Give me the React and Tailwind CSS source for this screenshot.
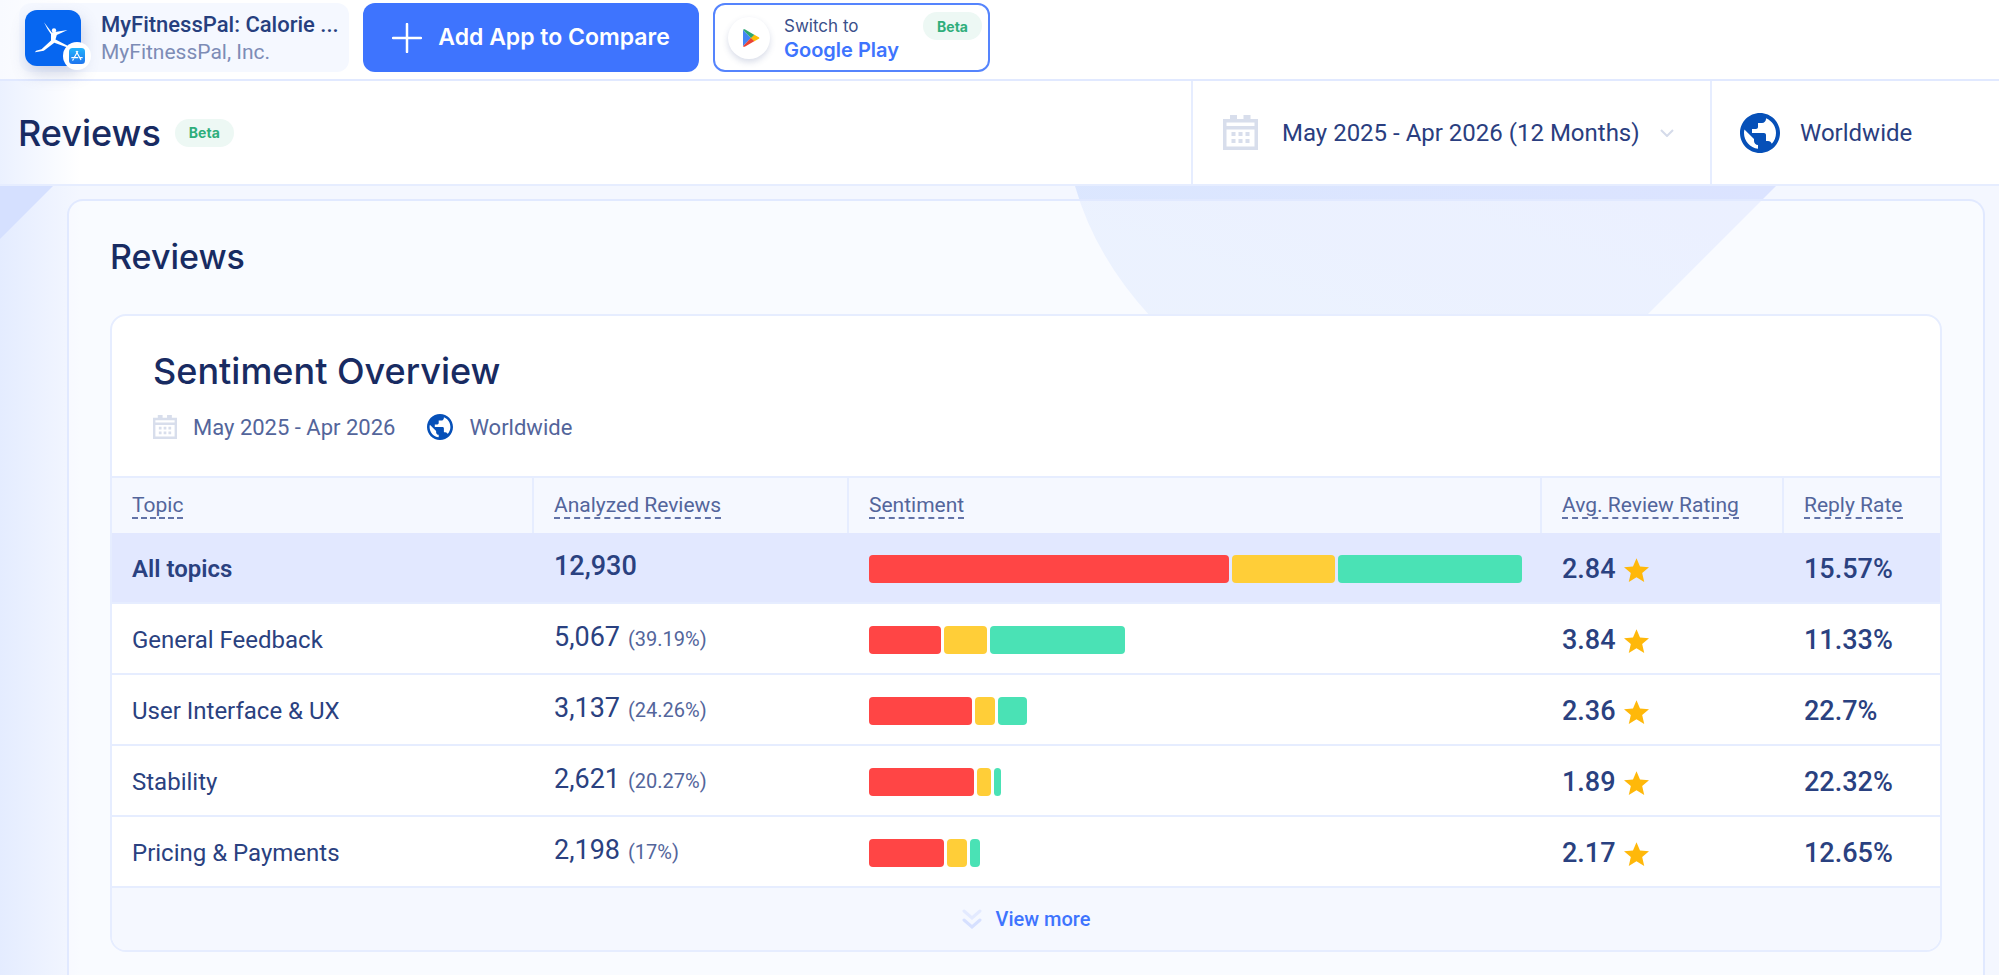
import React from 'react';

const topics = [
  {
    name: 'All topics',
    reviews: '12,930',
    share: 100,
    sentiment: [360, 103, 184],
    rating: '2.84',
    reply: '15.57%',
  },
  {
    name: 'General Feedback',
    reviews: '5,067',
    percent: '(39.19%)',
    share: 39.19,
    sentiment: [71, 43, 134],
    rating: '3.84',
    reply: '11.33%',
  },
  {
    name: 'User Interface & UX',
    reviews: '3,137',
    percent: '(24.26%)',
    share: 24.26,
    sentiment: [102, 20, 29],
    rating: '2.36',
    reply: '22.7%',
  },
  {
    name: 'Stability',
    reviews: '2,621',
    percent: '(20.27%)',
    share: 20.27,
    sentiment: [105, 14, 7],
    rating: '1.89',
    reply: '22.32%',
  },
  {
    name: 'Pricing & Payments',
    reviews: '2,198',
    percent: '(17%)',
    share: 17,
    sentiment: [75, 20, 10],
    rating: '2.17',
    reply: '12.65%',
  },
];

const columns = [
  { title: 'Topic', width: 'w-[422px]' },
  { title: 'Analyzed Reviews', width: 'w-[315px]' },
  { title: 'Sentiment', width: '' },
  { title: 'Avg. Review Rating', width: 'w-[242px]' },
  { title: 'Reply Rate', width: 'w-[156px]' },
];

const sentimentColors = ['bg-[#ff4545]', 'bg-[#ffce38]', 'bg-[#4ae2b5]'];

const CalendarIcon = ({ className }) => (
  <svg viewBox="0 0 35 35" className={className} fill="#d8deec" aria-hidden="true">
    <path
      fillRule="evenodd"
      d="M0 4h7V0h7v4h6.500V0h7v4H35v31H0zM3.500 7.500v3.500h28V7.500zM3.500 14.500v17h28v-17z"
    />
    <path d="M8.500 17h4v4h-4zM15.500 17h4v4h-4zM22.500 17h4v4h-4zM8.500 24h4v4h-4zM15.500 24h4v4h-4zM22.500 24h4v4h-4z" />
  </svg>
);

const GlobeIcon = ({ className }) => (
  <svg viewBox="2 2 20 20" className={className} fill="#0650b8" aria-hidden="true">
    <path d="M12 2C6.480 2 2 6.480 2 12s4.480 10 10 10 10-4.480 10-10S17.520 2 12 2zm-1 17.930c-3.950-.49-7-3.850-7-7.930 0-.62.08-1.210.21-1.790L9 15v1c0 1.100.9 2 2 2v1.930zm6.900-2.540c-.26-.81-1-1.390-1.900-1.390h-1v-3c0-.55-.45-1-1-1H8v-2h2c.55 0 1-.45 1-1V7h2c1.100 0 2-.9 2-2v-.41c2.930 1.190 5 4.060 5 7.410 0 2.080-.8 3.970-2.100 5.390z" />
  </svg>
);

const StarIcon = () => (
  <svg viewBox="2 2 20 19" className="h-6 w-[25px]" fill="#ffb80a" aria-hidden="true">
    <path d="M12 17.270 18.180 21l-1.640-7.030L22 9.240l-7.190-.61L12 2 9.190 8.630 2 9.240l5.460 4.730L5.820 21z" />
  </svg>
);

const BetaBadge = () => (
  <span className="flex h-7 items-center rounded-full bg-[#edf8f4] px-3.5 font-[Inter,sans-serif] text-[14px] font-bold text-[#2fae7b]">
    Beta
  </span>
);

const AppLogo = () => (
  <div className="relative size-14 shrink-0 rounded-xl bg-[#0666f0] shadow-[2px_8px_16px_rgba(80,100,160,0.25)]">
    <svg viewBox="0 0 56 56" className="size-14" aria-hidden="true">
      <circle cx="29" cy="20.500" r="2.200" fill="#fff" />
      <path
        d="M19 12.300 26.800 22.500 42.500 20l-10.700 5-1.300 4.500L48 38.500l-3.500-.2-15.200-5.600-10.500 8-8.800 1.600 1-1.600 5.500-1.500L26 30.500v-6.200L22.500 19z"
        fill="#fff"
      />
    </svg>
    {/* App Store marker */}
    <span className="absolute -right-2.5 -bottom-1 flex size-7 items-center justify-center rounded-full bg-white">
      <svg viewBox="0 0 16 16" className="size-4" aria-hidden="true">
        <defs>
          <linearGradient id="store" x1="0" y1="0" x2="0" y2="1">
            <stop offset="0" stopColor="#22b4fb" />
            <stop offset="1" stopColor="#1f74ee" />
          </linearGradient>
        </defs>
        <rect width="16" height="16" rx="3.500" fill="url(#store)" />
        <path
          d="M8.700 3.500 5 10M7.300 3.500 11.800 11.500M2.800 9.700h6M11 9.700h2.200M4.300 11.300l-.5.900"
          stroke="#fff"
          strokeWidth="1.200"
          strokeLinecap="round"
          fill="none"
        />
      </svg>
    </span>
  </div>
);

const PlayLogo = () => (
  <span className="flex size-[42px] shrink-0 items-center justify-center rounded-full bg-white shadow-[0_3px_6px_rgba(60,80,140,0.2)]">
    <svg viewBox="0 0 18 18" className="ml-1 size-[18px]" aria-hidden="true">
      <path d="M1 .8v16.400L9 9z" fill="#4285f4" />
      <path d="M1 .8C1.600 0 2.400 0 3.200.5L12.600 5.900 9.200 9.300z" fill="#2da771" />
      <path d="M1 17.200c.6.800 1.400.8 2.200.3l9.400-5.400L9 8.700z" fill="#ea4335" />
      <path d="M12.400 5.800 16.800 8.200c.8.500.8 1.100 0 1.600l-4.400 2.400L9 9z" fill="#fbbc04" />
    </svg>
  </span>
);

const TopBar = () => (
  <header className="flex h-[81px] items-start gap-3.5 border-b-2 border-[#e1e9ff] bg-[linear-gradient(to_right,#f8faff,#ffffff_80px)] pt-[3px] pl-[19px]">
    <div className="flex h-[69px] w-[330px] items-center gap-5 rounded-xl bg-[#f5f8ff] pl-1.5">
      <AppLogo />
      <div className="whitespace-nowrap">
        <p className="text-[22px] leading-7 font-medium text-[#263f7e]">MyFitnessPal: Calorie ...</p>
        <p className="text-[21px] leading-[26px] text-[#7d8cb6]">MyFitnessPal, Inc.</p>
      </div>
    </div>

    <button
      type="button"
      className="flex h-[69px] w-[336px] items-center justify-center gap-4 rounded-xl bg-[#3e74fe] font-[Inter,sans-serif] text-[23px] font-semibold text-white"
    >
      <svg viewBox="0 0 30 30" className="size-[30px]" aria-hidden="true">
        <path d="M15 1v28M1 15h28" stroke="#fff" strokeWidth="2.500" strokeLinecap="round" />
      </svg>
      Add App to Compare
    </button>

    <button
      type="button"
      className="flex h-[69px] w-[277px] items-center gap-3.5 rounded-xl border-2 border-[#5584fd] bg-white pl-[13px] text-left font-[Inter,sans-serif]"
    >
      <PlayLogo />
      <span className="flex flex-1 flex-col">
        <span className="text-[17px] leading-6 text-[#3a4f8a]">Switch to</span>
        <span className="text-[20px] leading-6 font-semibold whitespace-nowrap text-[#3e74fe]">
          Google Play
        </span>
      </span>
      <span className="-ml-20 self-start pt-[7px] pr-1.5">
        <BetaBadge />
      </span>
    </button>
  </header>
);

const PageBar = () => (
  <div className="flex h-[105px] items-stretch border-b-2 border-[#e6edff] bg-[linear-gradient(to_right,#ebf1ff,#ffffff_80px)]">
    <div className="flex flex-1 items-center gap-3.5 pl-[18px]">
      <h1 className="font-[Inter,sans-serif] text-[36px] font-medium text-[#182b62]">Reviews</h1>
      <BetaBadge />
    </div>
    <button
      type="button"
      className="flex w-[519px] items-center border-l-2 border-[#e6edff] pl-[30px] text-[24px] text-[#2a3e80]"
    >
      <CalendarIcon className="mr-6 size-[35px]" />
      May 2025 - Apr 2026 (12 Months)
      <svg viewBox="0 0 14 8" className="ml-5 h-2 w-3.5" aria-hidden="true">
        <path d="M1 1l6 6 6-6" stroke="#d5dbea" strokeWidth="2" fill="none" />
      </svg>
    </button>
    <button
      type="button"
      className="flex w-[289px] items-center gap-5 border-l-2 border-[#e6edff] pl-7 text-[24px] text-[#2a3e80]"
    >
      <GlobeIcon className="size-10" />
      Worldwide
    </button>
  </div>
);

const SentimentBar = ({ share, values }) => (
  <div className="flex h-7 gap-[3px]" style={{ width: `${share}%` }}>
    {values.map((value, i) => (
      <div key={i} className={`${sentimentColors[i]} basis-0 rounded`} style={{ flexGrow: value }} />
    ))}
  </div>
);

const SentimentTable = () => (
  <table className="w-full table-fixed border-separate border-spacing-0 text-left">
    <thead>
      <tr className="h-[57px] bg-[#f5f8ff]">
        {columns.map((col, i) => (
          <th
            key={col.title}
            className={`${col.width} border-t-2 border-[#e6edff] px-5 text-[21px] font-normal whitespace-nowrap text-[#53659b] ${
              i < columns.length - 1 ? 'border-r-2' : ''
            }`}
          >
            <span className="border-b-2 border-dashed border-[#6273a8]">{col.title}</span>
          </th>
        ))}
      </tr>
    </thead>
    <tbody className="text-[#2a4180] [&_td]:border-b-2 [&_td]:border-[#e6edff] [&_td]:px-5">
      {topics.map((topic, i) => (
        <tr key={topic.name} className={`h-[71px] ${i === 0 ? 'bg-[#e2e8ff]' : 'bg-white'}`}>
          <td className={`pt-0.5 text-[24px] ${i === 0 ? 'font-semibold' : ''}`}>{topic.name}</td>
          <td className="pb-0.5">
            <span className={`text-[27px] ${i === 0 ? 'font-medium' : ''}`}>{topic.reviews}</span>
            {topic.percent && (
              <span className="ml-2 text-[20px] text-[#53659b]">{topic.percent}</span>
            )}
          </td>
          <td className="pt-0.5">
            <SentimentBar share={topic.share} values={topic.sentiment} />
          </td>
          <td className="pt-1">
            <div className="flex items-center gap-2 text-[27px] font-medium">
              {topic.rating}
              <StarIcon />
            </div>
          </td>
          <td className="pt-1 text-[27px] font-medium">{topic.reply}</td>
        </tr>
      ))}
    </tbody>
  </table>
);

const SentimentCard = () => (
  <section className="overflow-hidden rounded-2xl border-2 border-[#e6edff] bg-white">
    <div className="px-[41px] pt-[35px] pb-[33px]">
      <h3 className="font-[Inter,sans-serif] text-[36px] leading-10 font-medium text-[#182b62]">
        Sentiment Overview
      </h3>
      <div className="mt-5 flex h-8 items-center text-[22px] text-[#53659b]">
        <CalendarIcon className="mr-4 size-6" />
        May 2025 - Apr 2026
        <GlobeIcon className="mr-4 ml-8 size-[26px]" />
        Worldwide
      </div>
    </div>
    <SentimentTable />
    <button
      type="button"
      className="flex h-[62px] w-full items-center justify-center gap-3.5 bg-[#f5f8ff] text-[20px] font-medium text-[#3e74fe]"
    >
      <svg viewBox="0 0 20 20" className="size-5" fill="none" strokeWidth="3" strokeLinecap="round" aria-hidden="true">
        <path d="M2 2l8 7 8-7" stroke="#e3eaff" />
        <path d="M2 11l8 7 8-7" stroke="#d6e0ff" />
      </svg>
      View more
    </button>
  </section>
);

// Soft shapes behind the translucent panel
const Backdrop = () => (
  <svg className="absolute top-0 left-0 h-[400px] w-[1999px]" viewBox="0 0 1999 400" aria-hidden="true">
    <defs>
      <linearGradient id="bowl" x1="1" y1="0" x2="0" y2="1">
        <stop offset="0" stopColor="#dbe3ff" />
        <stop offset="1" stopColor="#dceafe" />
      </linearGradient>
    </defs>
    <path d="M0 0h53L0 53z" fill="#d5e0ff" />
    <path d="M1075 0Q1095 70 1150 130Q1210 200 1300 240L1536 240L1776 0z" fill="url(#bowl)" />
  </svg>
);

const App = () => {
  return (
    <div className="flex min-h-screen flex-col font-[Roboto,sans-serif]">
      <TopBar />
      <PageBar />
      <main className="relative flex flex-1 flex-col overflow-hidden bg-[linear-gradient(to_right,#e4ecff,#f4f7ff_80px)] pt-[13px] pr-3.5 pl-[67px]">
        <Backdrop />
        <section className="relative flex-1 rounded-t-2xl border-2 border-b-0 border-[#e1e9ff] bg-white/45 px-[41px] pt-9 pb-6">
          <h2 className="mb-[37px] font-[Inter,sans-serif] text-[34px] leading-10 font-medium text-[#182b62]">
            Reviews
          </h2>
          <SentimentCard />
        </section>
      </main>
    </div>
  );
};

export default App;
